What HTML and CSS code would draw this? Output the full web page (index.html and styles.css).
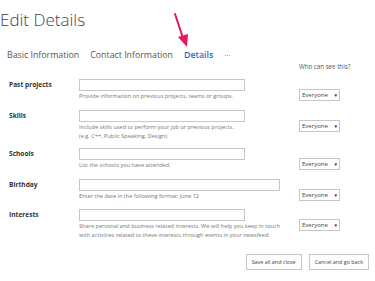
FILE: index.html
```html
<!DOCTYPE html>
<html lang="en">
<head>
  <meta charset="UTF-8">
  <title>Edit Details</title>
  <link rel="stylesheet" href="styles.css">
</head>
<body>
  <div class="page">
    <h1 class="title">Edit Details</h1>

    <!-- Tabs -->
    <nav class="tabs">
      <a href="#">Basic Information</a>
      <a href="#">Contact Information</a>
      <a href="#" class="active">Details</a>
      <a href="#" class="more">&middot;&middot;&middot;</a>
    </nav>

    <svg class="arrow" width="30" height="40" viewBox="0 0 30 40">
      <line x1="4" y1="2" x2="12" y2="26" stroke="#e8175d" stroke-width="2" stroke-linecap="round"/>
      <polygon points="7,25 17,22 16,35" fill="#e8175d"/>
    </svg>

    <div class="who">Who can see this?</div>

    <form class="details">
      <div class="row">
        <label class="label">Past projects</label>
        <div class="field">
          <input type="text" class="box">
          <div class="help">Provide information on previous projects, teams or groups.</div>
        </div>
        <div class="share"><span class="select">Everyone <i>&#9660;</i></span></div>
      </div>

      <div class="row">
        <label class="label">Skills</label>
        <div class="field">
          <input type="text" class="box">
          <div class="help">Include skills used to perform your job or previous projects.<br>(e.g. C++, Public Speaking, Design)</div>
        </div>
        <div class="share"><span class="select">Everyone <i>&#9660;</i></span></div>
      </div>

      <div class="row">
        <label class="label">Schools</label>
        <div class="field">
          <input type="text" class="box">
          <div class="help">List the schools you have attended.</div>
        </div>
        <div class="share"><span class="select">Everyone <i>&#9660;</i></span></div>
      </div>

      <div class="row">
        <label class="label">Birthday</label>
        <div class="field">
          <input type="text" class="box wide">
          <div class="help">Enter the date in the following format: June 12</div>
        </div>
        <div class="share"><span class="select">Everyone <i>&#9660;</i></span></div>
      </div>

      <div class="row">
        <label class="label">Interests</label>
        <div class="field">
          <input type="text" class="box">
          <div class="help">Share personal and business related interests. We will help you keep in touch<br>with activities related to these interests through events in your newsfeed.</div>
        </div>
        <div class="share"><span class="select">Everyone <i>&#9660;</i></span></div>
      </div>

      <div class="buttons">
        <button type="button">Save all and close</button>
        <button type="button">Cancel and go back</button>
      </div>
    </form>
  </div>
</body>
</html>
```

FILE: styles.css
```css
body {
  margin: 0;
  background: #fff;
  font-family: "Open Sans", "Noto Sans", sans-serif;
  color: #444;
}
.page {
  position: relative;
  width: 375px;
  height: 281px;
  overflow: hidden;
}
.title {
  margin: 0;
  padding: 8px 0 0 0;
  font-size: 17px;
  font-weight: 300;
  color: #444;
  line-height: 23px;
}
.tabs {
  display: flex;
  gap: 11px;
  padding: 17px 0 0 7px;
  font-size: 8.8px;
  line-height: 14px;
}
.tabs a {
  color: #555;
  text-decoration: none;
}
.tabs a.active {
  color: #2a6ebb;
  font-weight: 600;
}
.tabs a.more {
  color: #666;
  font-size: 8px;
}
.arrow {
  position: absolute;
  left: 171px;
  top: 12px;
}
.who {
  padding: 0 0 0 299px;
  font-size: 6.2px;
  line-height: 9px;
  color: #555;
}
.details {
  padding: 8px 0 0 9px;
}
.row {
  display: flex;
  align-items: flex-start;
  margin-bottom: 7.5px;
}
.label {
  width: 70px;
  font-size: 6.6px;
  font-weight: 700;
  color: #333;
  line-height: 10px;
  padding-top: 1px;
}
.field {
  width: 220px;
}
.box {
  display: block;
  box-sizing: border-box;
  width: 166px;
  height: 12px;
  margin: 0;
  border: 1px solid #c6c6c6;
  padding: 0;
}
.box.wide {
  width: 201px;
}
.help {
  font-size: 5.6px;
  line-height: 9px;
  color: #777;
  padding-top: 1px;
}
.share {
  padding-top: 1px;
}
.select {
  display: inline-block;
  box-sizing: border-box;
  width: 41px;
  height: 12px;
  border: 1px solid #c6c6c6;
  font-size: 6px;
  line-height: 10px;
  padding-left: 2px;
  color: #444;
}
.select i {
  font-style: normal;
  font-size: 4.5px;
  margin-left: 4px;
  color: #222;
}
.buttons {
  display: flex;
  justify-content: flex-end;
  gap: 7px;
  padding: 6px 6px 0 0;
}
.buttons button {
  box-sizing: border-box;
  height: 16px;
  padding: 0 5px;
  background: #fdfdfd;
  border: 1px solid #c6c6c6;
  font-family: "Open Sans", "Noto Sans", sans-serif;
  font-size: 5.4px;
  color: #444;
}
```
